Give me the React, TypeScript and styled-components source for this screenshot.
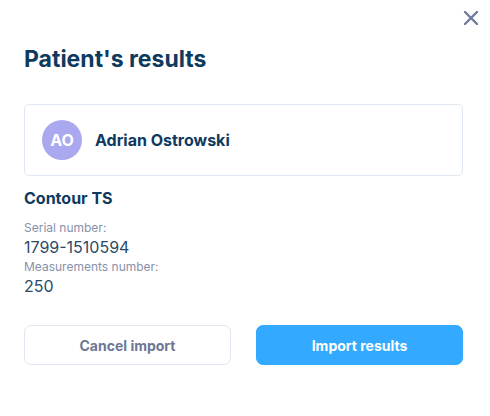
import React from "react";
import styled, { createGlobalStyle } from "styled-components";

const GlobalStyle = createGlobalStyle`
    body {
        margin: 0;
        background: #ffffff;
        font-family: Inter, "Noto Sans", sans-serif;
    }
`;

const Modal = styled.div`
    position: relative;
    width: 490px;
    height: 416px;
    box-sizing: border-box;
    padding: 44px 27px 0 24px;
    background: #fff;
`;

const CloseButton = styled.button`
    position: absolute;
    top: 9px;
    right: 10px;
    width: 18px;
    height: 18px;
    padding: 0;
    border: none;
    background: none;
    cursor: pointer;
    display: flex;
    align-items: center;
    justify-content: center;
`;

const Title = styled.h1`
    margin: 0;
    font-size: 23px;
    line-height: 30px;
    font-weight: 700;
    color: #0e3a5e;
`;

const PatientCard = styled.div`
    margin-top: 30px;
    height: 72px;
    box-sizing: border-box;
    border: 1px solid #dfe7f0;
    border-radius: 5px;
    padding: 0 17px;
    display: flex;
    align-items: center;
    gap: 13px;
`;

const Avatar = styled.div<{ color: string }>`
    width: 40px;
    height: 40px;
    border-radius: 50%;
    background: ${(props) => props.color};
    color: #fff;
    font-size: 16px;
    font-weight: 700;
    display: flex;
    align-items: center;
    justify-content: center;
`;

const PatientName = styled.span`
    font-size: 16px;
    font-weight: 700;
    color: #0e3a5e;
`;

const DeviceName = styled.h2`
    margin: 10px 0 0;
    font-size: 16px;
    line-height: 24px;
    font-weight: 700;
    color: #0e3a5e;
`;

const Field = styled.div<{ first?: boolean }>`
    display: flex;
    flex-direction: column;
    margin-top: ${(props) => (props.first ? "10px" : "1px")};
`;

const Label = styled.span`
    font-size: 12px;
    line-height: 16px;
    color: #8891aa;
`;

const Value = styled.span`
    font-size: 16px;
    line-height: 22px;
    color: #2b4a68;
`;

const Actions = styled.div`
    margin-top: 28px;
    display: grid;
    grid-template-columns: 1fr 1fr;
    gap: 25px;
`;

const Button = styled.button<{ primary?: boolean }>`
    height: 40px;
    border-radius: 7px;
    font-family: Inter, "Noto Sans", sans-serif;
    font-size: 14px;
    font-weight: 700;
    cursor: pointer;
    border: 1px solid ${(props) => (props.primary ? "#33a9ff" : "#dfe7f0")};
    background: ${(props) => (props.primary ? "#33a9ff" : "#fff")};
    color: ${(props) => (props.primary ? "#fff" : "#6d7795")};
`;

const App: React.FC = () => {
    return (
        <>
            <GlobalStyle />
            <Modal>
                <CloseButton aria-label="Close">
                    <svg width="16" height="16" viewBox="0 0 16 16">
                        <path d="M2 2L14 14M14 2L2 14" stroke="#6e7a9c" strokeWidth="2.4" strokeLinecap="round" />
                    </svg>
                </CloseButton>
                <Title>Patient's results</Title>
                <PatientCard>
                    <Avatar color="#aaa9ef">AO</Avatar>
                    <PatientName>Adrian Ostrowski</PatientName>
                </PatientCard>
                <DeviceName>Contour TS</DeviceName>
                <Field first>
                    <Label>Serial number:</Label>
                    <Value>1799-1510594</Value>
                </Field>
                <Field>
                    <Label>Measurements number:</Label>
                    <Value>250</Value>
                </Field>
                <Actions>
                    <Button>Cancel import</Button>
                    <Button primary>Import results</Button>
                </Actions>
            </Modal>
        </>
    );
};

export default App;
